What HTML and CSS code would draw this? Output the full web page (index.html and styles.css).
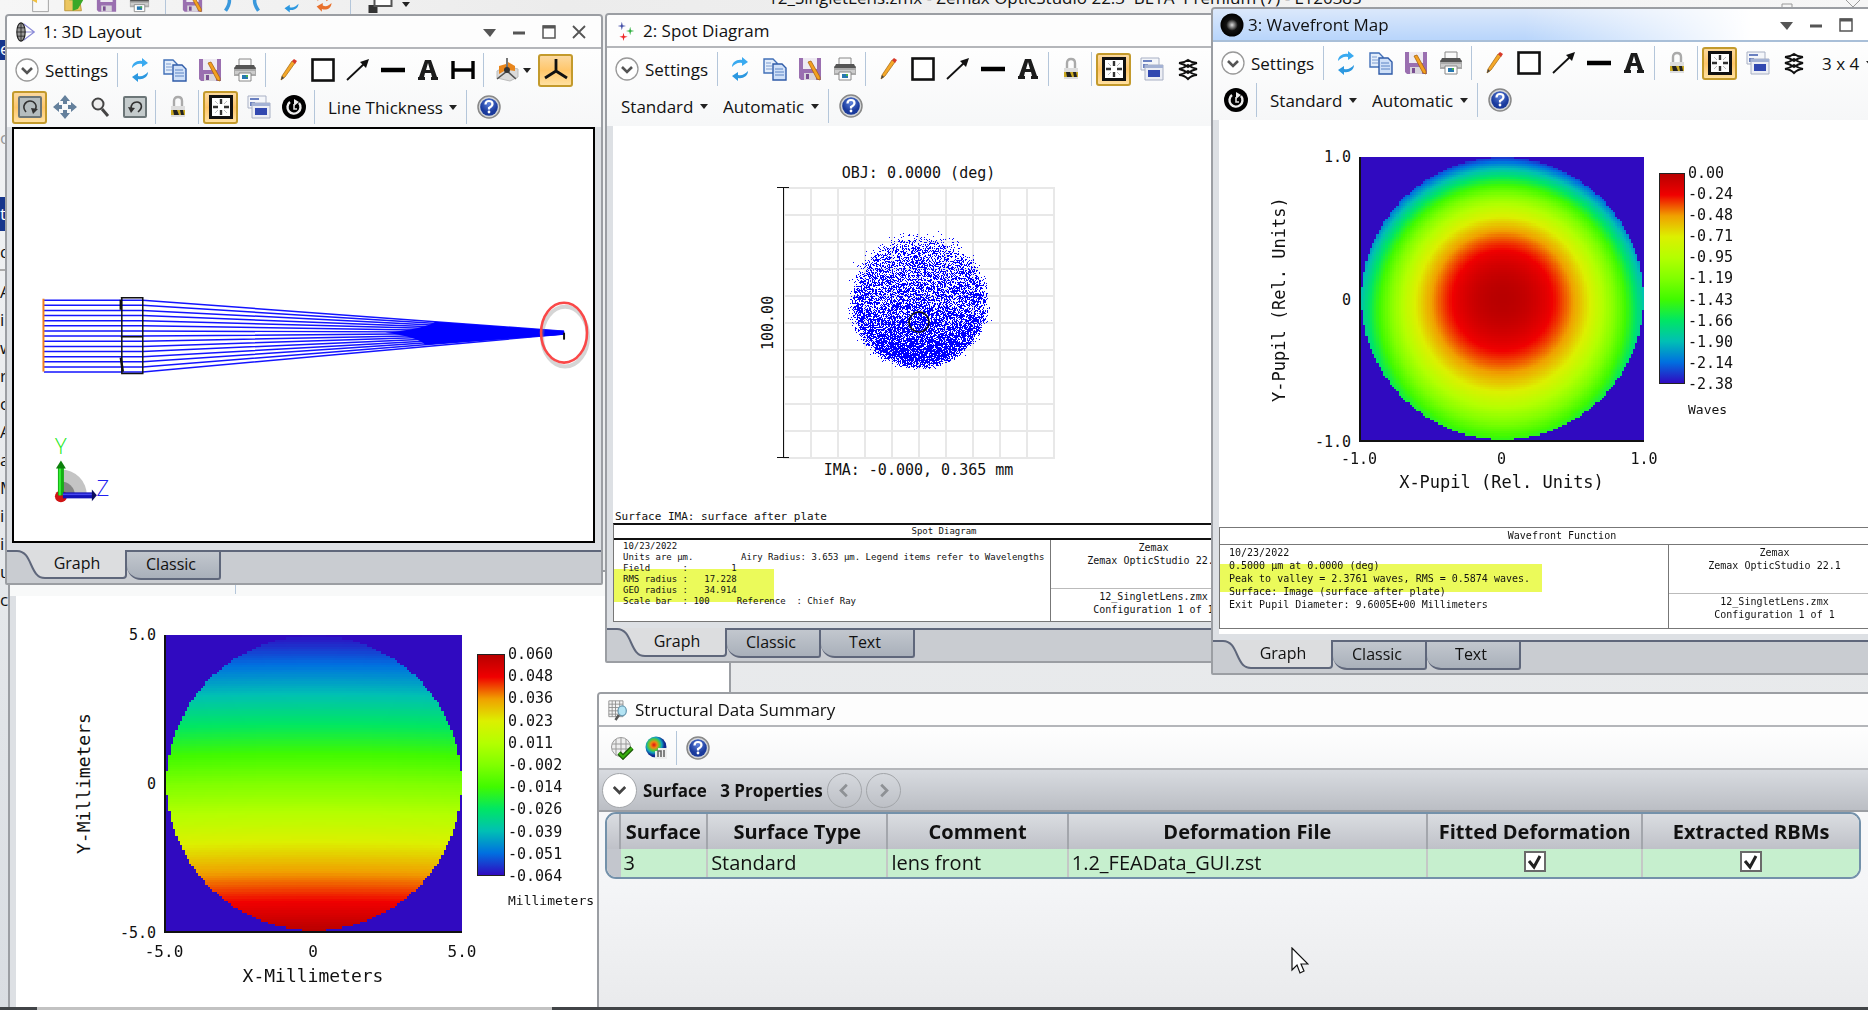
FILE: index.html
```html
<!DOCTYPE html>
<html lang="en">
<head>
    <meta charset="UTF-8">
    <meta name="viewport" content="width=device-width, initial-scale=1.0">
    <title>12_SingletLens.zmx - Zemax OpticStudio</title>
    <link rel="stylesheet" href="styles.css">
</head>
<body>
    <!-- Icon set -->
    <svg class="sprite" aria-hidden="true">
        <defs>
            <radialGradient id="ring"><stop offset="0" stop-color="#ddd"/><stop offset=".25" stop-color="#777"/><stop offset=".5" stop-color="#111"/><stop offset="1" stop-color="#000"/></radialGradient>
            <radialGradient id="blueball" cy=".3"><stop offset="0" stop-color="#5d82dc"/><stop offset="1" stop-color="#1a3a9c"/></radialGradient>
            <radialGradient id="heat" cx=".4" cy=".4"><stop offset="0" stop-color="#e01010"/><stop offset=".3" stop-color="#f08a10"/><stop offset=".55" stop-color="#50c840"/><stop offset=".75" stop-color="#10a0c0"/><stop offset="1" stop-color="#102a90"/></radialGradient>
        </defs>
        <symbol id="i-lens" viewBox="0 0 24 24"><path d="M9 2 22 12 9 22M2 12h20" fill="none" stroke="#8a8ad8" stroke-width="1.4"/><ellipse cx="6" cy="12" rx="5" ry="11" fill="#999" stroke="#222" stroke-width="1.4"/><path d="M6 1v22M2 7h8M1 12h10M2 17h8" stroke="#222"/></symbol>
        <symbol id="i-spots" viewBox="0 0 24 24"><path d="M7 1l1 4 4 1-4 1-1 4-1-4-4-1 4-1z" fill="#4450a8"/><path d="M17 7l1 4 4 1-4 1-1 4-1-4-4-1 4-1z" fill="#30b040"/><path d="M9 14l1 4 4 1-4 1-1 4-1-4-4-1 4-1z" fill="#f02828"/></symbol>
        <symbol id="i-ring" viewBox="0 0 24 24"><circle cx="12" cy="12" r="11.500" fill="url(#ring)"/></symbol>
        <symbol id="i-expand" viewBox="0 0 24 24"><circle cx="12" cy="12" r="11" fill="#fff" stroke="#999" stroke-width="1.300"/><path d="M7 10l5 5 5-5" fill="none" stroke="#555" stroke-width="2.600"/></symbol>
        <symbol id="i-refresh" viewBox="0 0 24 24"><path d="M4 10C4 5 9 2 14 3V0l6 5-6 4V6C10 5 7 7 4 10z" fill="#3aaaf0"/><path d="M20 14c0 5-5 8-10 7v3l-6-5 6-4v3c4 1 7-1 10-4z" fill="#2c98e0"/></symbol>
        <symbol id="i-copy" viewBox="0 0 24 24"><path d="M1 2h9l4 4v10H1z" fill="#e4eefb" stroke="#4270b8" stroke-width="1.400"/><path d="M3 6h5M3 9h6M3 12h6" stroke="#7c9cd0"/><path d="M10 7h9l4 4v12H10z" fill="#cfe0f8" stroke="#2f5ba8" stroke-width="1.400"/><path d="M12 12h8M12 15h9M12 18h9" stroke="#5c84c4"/></symbol>
        <symbol id="i-floppy" viewBox="0 0 24 24"><path d="M1 1h22v22H3l-2-2z" fill="#9a6fb0"/><path d="M5 1h14v11H5z" fill="#eeeaf2"/><path d="M6 16h12v7H6z" fill="#d8d4dc"/><path d="M8 17h3v5H8z" fill="#7a4f92"/></symbol>
        <symbol id="i-save" viewBox="0 0 24 24"><use href="#i-floppy"/><path d="M10 5l3-1 9 16v3l-3-1z" fill="#f4a020" stroke="#a86410" stroke-width=".8"/></symbol>
        <symbol id="i-print" viewBox="0 0 24 24"><path d="M6 1h12v8H6z" fill="#fafafa" stroke="#888"/><path d="M1 9h22v9H1z" fill="#aaa"/><path d="M3 7h18l2 4H1z" fill="#555"/><path d="M2 13h20v3H2z" fill="#ccc"/><path d="M6 15h12v8H6z" fill="#fff" stroke="#888"/><path d="M9 17h6v4H9z" fill="#2878b0"/><path d="M13 17h2v2h-2z" fill="#4ab04a"/></symbol>
        <symbol id="i-pencil" viewBox="0 0 24 24"><path d="M6 18 16 3l3 2L9 19l-4 3z" fill="#f6a828" stroke="#a8701c" stroke-width=".8"/><path d="M16 3l2-2 3 2-2 3z" fill="#d83a2a"/><path d="M5 22l1-4 2 2z" fill="#444"/></symbol>
        <symbol id="i-rect" viewBox="0 0 24 24"><rect x="1.500" y="1.500" width="21" height="21" fill="#fff" stroke="#111" stroke-width="2.600"/></symbol>
        <symbol id="i-arrow" viewBox="0 0 24 24"><path d="M1 22 19 5" stroke="#111" stroke-width="1.800"/><path d="M23 1 14 4l6 6z" fill="#111"/></symbol>
        <symbol id="i-line" viewBox="0 0 24 24"><path d="M0 12h24" stroke="#000" stroke-width="4.500"/></symbol>
        <symbol id="i-text" viewBox="0 0 24 24"><path d="M9 2h6l6 17h1v3h-7v-3h1l-1-4H9l-1 4h1v3H2v-3h1zM10 12h4l-2-7z" fill="#1c1c1c" fill-rule="evenodd"/></symbol>
        <symbol id="i-dim" viewBox="0 0 24 24"><path d="M2 3v18M22 3v18M2 12h20" stroke="#000" stroke-width="3.400"/></symbol>
        <symbol id="i-planes" viewBox="0 0 24 24"><path d="M2 13l9-5 12 3v8l-8 4-13-3z" fill="#dadada" stroke="#bbb"/><path d="M4 8l7-2v6l-7 4zM13 4l7 4v5l-7-1z" fill="#e8861c"/><path d="M12 0v13L2 21M12 13l9 8" stroke="#555" stroke-width="1.600" fill="none"/><circle cx="12" cy="12" r="3" fill="#333"/></symbol>
        <symbol id="i-tripod" viewBox="0 0 24 24"><path d="M12 1v12M12 13 1 20M12 13l11 7" stroke="#111" stroke-width="2.800" fill="none"/></symbol>
        <symbol id="i-rotate" viewBox="0 0 24 24"><rect x="1" y="2" width="22" height="20" rx="1" fill="#b4bcbe" stroke="#6c7678" stroke-width="2"/><path d="M8 17C3 11 8 6 12 6s8 4 5 9" fill="none" stroke="#333" stroke-width="1.600"/><path d="M13 13l7 1-5 5z" fill="#333"/></symbol>
        <symbol id="i-unrotate" viewBox="0 0 24 24"><rect x="1" y="2" width="22" height="20" rx="1" fill="#c4cbcc" stroke="#6c7678" stroke-width="2"/><path d="M15 17C21 12 18 7 14 7S8 9 8 14" fill="none" stroke="#333" stroke-width="1.600"/><path d="M5 12l7 1-4 5z" fill="#333"/></symbol>
        <symbol id="i-move" viewBox="0 0 24 24"><path d="M12 0l5 6h-3v3h-4V6H7zM12 24l5-6h-3v-3h-4v3H7zM0 12l6-5v3h3v4H6v3zM24 12l-6-5v3h-3v4h3v3z" fill="#64809c"/></symbol>
        <symbol id="i-zoom" viewBox="0 0 24 24"><circle cx="10" cy="9" r="5.500" fill="#eee" stroke="#444" stroke-width="2"/><path d="M14 14l6 7" stroke="#444" stroke-width="3"/></symbol>
        <symbol id="i-lock" viewBox="0 0 24 24"><path d="M8 12V6q0-4 4-4t4 4v6" fill="none" stroke="#aaa" stroke-width="2.400"/><path d="M5 11h14v11H5z" fill="#ddd"/><path d="M5 15h14v5H5z" fill="#c9a820"/><path d="M7 15h4l2 5H8zM14 15h3l1 5h-3z" fill="#222"/></symbol>
        <symbol id="i-fit" viewBox="0 0 24 24"><rect x="1.500" y="1.500" width="21" height="21" fill="#fff" stroke="#111" stroke-width="3"/><path d="M12 4v5M12 15v5M4 12h5M15 12h5" stroke="#333" stroke-width="2.400"/><path d="M6 6l3 3M18 6l-3 3M6 18l3-3M18 18l-3-3" stroke="#bbb"/></symbol>
        <symbol id="i-windows" viewBox="0 0 24 24"><path d="M1 1h18v12H1z" fill="#f4f6fa" stroke="#a8b0c4"/><path d="M3 3h9v2H3zM3 7h5v4H3z" fill="#6a80c0"/><path d="M5 8h18v15H5z" fill="#eceef4" stroke="#a8b0c4"/><path d="M5 8h18v3H5z" fill="#a4b2d4"/><path d="M8 13h12v7H8z" fill="#3148b0"/></symbol>
        <symbol id="i-clock" viewBox="0 0 24 24"><circle cx="12" cy="12" r="12" fill="#000"/><path d="M8 7a6.500 6.500 0 1 0 9 1" fill="none" stroke="#eee" stroke-width="2.400"/><path d="M12 4l5 3-5 4z" fill="#eee"/><path d="M12 9v5h3" fill="none" stroke="#ddd" stroke-width="1.600"/></symbol>
        <symbol id="i-help" viewBox="0 0 24 24"><circle cx="12" cy="12" r="11" fill="#d4d6d8" stroke="#888" stroke-width="1.500"/><circle cx="12" cy="12" r="8.800" fill="url(#blueball)"/><path d="M8.500 9.500q0-3.500 3.500-3.500t3.500 3q0 2-3.500 4v1.500" fill="none" stroke="#fff" stroke-width="2.200"/><circle cx="12" cy="17" r="1.400" fill="#fff"/></symbol>
        <symbol id="i-layers" viewBox="0 0 24 24"><path d="M12 3q4 3 9 3-5 1-9 4-4-3-9-4 5 0 9-3zM3 12q5 1 9 4 4-3 9-4-5-1-9-4-4 3-9 4zM3 18q5 0 9 4 4-4 9-4-5-1-9-4-4 3-9 4z" fill="#fff" stroke="#111" stroke-width="2"/></symbol>
        <symbol id="i-sheet" viewBox="0 0 24 24"><path d="M1 1h17v19H1z" fill="#f4f4f4" stroke="#888"/><path d="M1 5h17M1 9h17M1 13h17M1 17h17M5 1v19M9 1v19M14 1v19" stroke="#888"/><ellipse cx="17" cy="13" rx="5" ry="6" fill="#b4e4f4" stroke="#6898b0" stroke-width="1.500"/><path d="M13 18l-4 6" stroke="#555" stroke-width="3"/></symbol>
        <symbol id="i-meshok" viewBox="0 0 24 24"><circle cx="11" cy="11" r="9.500" fill="#eee" stroke="#999"/><path d="M2 8h18M2 13h18M6 3v17M11 2v19M16 3v17" stroke="#999"/><path d="M9 17l4 4L22 12" fill="none" stroke="#1c5a08" stroke-width="4.600"/><path d="M9 17l4 4L22 12" fill="none" stroke="#38b010" stroke-width="2.200"/></symbol>
        <symbol id="i-heat" viewBox="0 0 24 24"><circle cx="12" cy="11" r="10.500" fill="url(#heat)"/><path d="M11 15h3v-3h9v11H11z" fill="#eee"/><path d="M14 21v-6h3v6M20 21v-7" stroke="#666" stroke-width="1.600" fill="none"/></symbol>
        <symbol id="i-new" viewBox="0 0 24 24"><path d="M3 0h18v23H3z" fill="#f8f8f8" stroke="#999"/><path d="M2 10l6-4v7z" fill="#f0c040"/></symbol>
        <symbol id="i-folder" viewBox="0 0 24 24"><path d="M2 2h16l3 20H2z" fill="#ecc660" stroke="#b89030"/><path d="M11 22V10H7l8-9 8 9-6 10z" fill="#3aa828"/></symbol>
        <symbol id="i-undo" viewBox="0 0 24 24"><path d="M4 2q20 2 8 20" fill="none" stroke="#3a98dc" stroke-width="4"/></symbol>
        <symbol id="i-redo" viewBox="0 0 24 24"><path d="M20 2q-20 2-8 20" fill="none" stroke="#3a98dc" stroke-width="4"/></symbol>
        <symbol id="i-orange" viewBox="0 0 24 24"><path d="M4 11C4 5 10 2 15 4l0-3 6 6-7 4V8C10 6 7 8 4 11zM20 13c0 6-6 9-11 7v3l-6-6 7-4v3c4 2 7 0 10-3z" fill="#e8702c"/></symbol>
        <symbol id="i-boxes" viewBox="0 0 24 24"><path d="M0 15h9v8H0z" fill="#333"/><path d="M6 2h17v14H6z" fill="#fff" stroke="#555" stroke-width="2"/></symbol>
        <symbol id="i-menu" viewBox="0 0 20 20"><path d="M4 7h13l-6 8z" fill="#555"/></symbol>
        <symbol id="i-min" viewBox="0 0 20 20"><path d="M4 11h12" stroke="#555" stroke-width="3"/></symbol>
        <symbol id="i-max" viewBox="0 0 20 20"><path d="M4 4h12v12H4z" fill="none" stroke="#555" stroke-width="1.500"/><path d="M4 5h12" stroke="#555" stroke-width="3"/></symbol>
        <symbol id="i-close" viewBox="0 0 20 20"><path d="M4 4l12 12M16 4 4 16" stroke="#555" stroke-width="1.800"/></symbol>
        <symbol id="tab-shape" viewBox="0 0 120 29"><path d="M0 1h10C26 1 22 28 38 28h78q3 0 3-3V0H0z" fill="#dcdddf"/><path d="M0 1h10C26 1 22 28 38 28h78q3 0 3-3V0" fill="none" stroke="#5f677b" stroke-width="2"/></symbol>
    </svg>

    <!-- Main application frame -->
    <header class="app-bar">
        <div class="app-tools">
            <svg><use href="#i-new"/></svg>
            <svg><use href="#i-folder"/></svg>
            <svg><use href="#i-floppy"/></svg>
            <svg><use href="#i-print"/></svg>
            <span class="sep"></span>
            <svg><use href="#i-save"/></svg>
            <svg><use href="#i-undo"/></svg>
            <svg><use href="#i-redo"/></svg>
            <svg><use href="#i-refresh"/></svg>
            <svg><use href="#i-orange"/></svg>
            <span class="sep"></span>
            <svg class="boxes"><use href="#i-boxes"/></svg>
            <span class="caret"></span>
        </div>
        <p class="app-title">12_SingletLens.zmx - Zemax OpticStudio 22.3&nbsp; BETA&nbsp; Premium (7) - L120385</p>
        <svg class="app-restore" viewBox="0 0 90 14"><path d="M1 14V8h10v6M4 8V4h10v7h-3M68 0l14 14M82 0 68 14" fill="none" stroke="#999"/></svg>
    </header>
    <nav class="sidebar">
        <span class="mark">e</span>
        <span class="faint">o</span>
        <span class="mark mark-low">t</span>
        <span class="head">d</span>
        <ul>
            <li>A</li><li>i</li><li>w</li><li>r</li><li>o</li><li>A</li><li>a</li><li>M</li><li>i</li><li>i</li><li>u</li><li>c</li>
        </ul>
    </nav>

    <!-- Deformation plot, behind the others -->
    <section class="window win-deform">
        <div class="toolbar-end"><span class="sep"></span></div>
        <div class="paper">
            <figure class="heatmap heatmap-deform">
                <div class="y-label">Y-Millimeters</div>
                <div class="y-ticks"><span>5.0</span><span>0</span><span>-5.0</span></div>
                <canvas id="deformMap" width="128" height="128"></canvas>
                <div class="legend-bar"></div>
                <div class="legend-ticks"><span>0.060</span><span>0.048</span><span>0.036</span><span>0.023</span><span>0.011</span><span>-0.002</span><span>-0.014</span><span>-0.026</span><span>-0.039</span><span>-0.051</span><span>-0.064</span></div>
                <div class="legend-unit">Millimeters</div>
                <div class="x-ticks"><span>-5.0</span><span>0</span><span>5.0</span></div>
                <figcaption class="x-label">X-Millimeters</figcaption>
            </figure>
        </div>
    </section>

    <!-- 1: 3D Layout -->
    <section class="window win-layout">
        <header class="title">
            <svg class="icon"><use href="#i-lens"/></svg>
            <h2>1: 3D Layout</h2>
            <div class="win-buttons">
                <button aria-label="Menu"><svg><use href="#i-menu"/></svg></button>
                <button aria-label="Minimize"><svg><use href="#i-min"/></svg></button>
                <button aria-label="Maximize"><svg><use href="#i-max"/></svg></button>
                <button aria-label="Close"><svg><use href="#i-close"/></svg></button>
            </div>
        </header>
        <div class="toolbar">
            <div class="tools">
                <button class="settings"><svg class="icon"><use href="#i-expand"/></svg>Settings</button>
                <span class="sep"></span>
                <button class="tool" aria-label="Update"><svg class="icon"><use href="#i-refresh"/></svg></button>
                <button class="tool" aria-label="Copy"><svg class="icon"><use href="#i-copy"/></svg></button>
                <button class="tool" aria-label="Save"><svg class="icon"><use href="#i-save"/></svg></button>
                <button class="tool" aria-label="Print"><svg class="icon"><use href="#i-print"/></svg></button>
                <span class="sep"></span>
                <button class="tool" aria-label="Draw"><svg class="icon"><use href="#i-pencil"/></svg></button>
                <button class="tool" aria-label="Rectangle"><svg class="icon"><use href="#i-rect"/></svg></button>
                <button class="tool" aria-label="Arrow"><svg class="icon"><use href="#i-arrow"/></svg></button>
                <button class="tool" aria-label="Line"><svg class="icon"><use href="#i-line"/></svg></button>
                <button class="tool" aria-label="Annotate"><svg class="icon"><use href="#i-text"/></svg></button>
                <button class="tool" aria-label="Dimension"><svg class="icon"><use href="#i-dim"/></svg></button>
                <span class="sep"></span>
                <button class="tool tool-wide" aria-label="View plane"><svg class="icon"><use href="#i-planes"/></svg><span class="caret"></span></button>
                <button class="tool on" aria-label="Axis"><svg class="icon"><use href="#i-tripod"/></svg></button>
            </div>
            <div class="tools">
                <button class="tool on" aria-label="Rotate"><svg class="icon"><use href="#i-rotate"/></svg></button>
                <button class="tool" aria-label="Pan"><svg class="icon"><use href="#i-move"/></svg></button>
                <button class="tool" aria-label="Zoom"><svg class="icon"><use href="#i-zoom"/></svg></button>
                <button class="tool" aria-label="Reset view"><svg class="icon"><use href="#i-unrotate"/></svg></button>
                <span class="sep"></span>
                <button class="tool" aria-label="Lock"><svg class="icon"><use href="#i-lock"/></svg></button>
                <span class="sep"></span>
                <button class="tool on fit" aria-label="Fit"><svg class="icon"><use href="#i-fit"/></svg></button>
                <button class="tool" aria-label="Clone window"><svg class="icon"><use href="#i-windows"/></svg></button>
                <button class="tool" aria-label="Auto update"><svg class="icon"><use href="#i-clock"/></svg></button>
                <span class="sep"></span>
                <span class="drop"><select aria-label="Line thickness"><option>Line Thickness</option></select></span>
                <span class="sep"></span>
                <button class="tool" aria-label="Help"><svg class="icon"><use href="#i-help"/></svg></button>
            </div>
        </div>
        <div class="paper paper-framed">
            <svg class="layout-plot" viewBox="0 0 580 412" preserveAspectRatio="xMinYMin meet">
                <g id="rays" stroke="#1414ff" stroke-width="1.500" fill="none"></g>
                <path d="M372 204Q412 200 422 193L551 202.500V206L412 216Q404 208 372 204z" fill="#0000ff"/>
                <path d="M29.500 170v73" stroke="#f08020" stroke-width="2"/>
                <path d="M107 169h22v76h-21V169M107 208h22" fill="none" stroke="#111" stroke-width="1.500"/>
                <path d="M107 171v10M107 229l2 14" stroke="#111" stroke-width="2.500"/>
                <path d="M551 204v7" stroke="#111" stroke-width="2"/>
                <ellipse cx="552" cy="208" rx="23" ry="30" fill="none" stroke="#888" stroke-opacity=".35" stroke-width="4"/>
                <ellipse cx="551" cy="204" rx="23" ry="30" fill="none" stroke="#fa4848" stroke-width="2.600"/>
                <path d="M47 367V341a26 26 0 0 1 26 26z" fill="#c4c4c4"/>
                <path d="M47 367V353a14 14 0 0 1 14 14z" fill="#858585"/>
                <circle cx="47" cy="368" r="6" fill="#d01414"/>
                <path d="M47 367V339" stroke="#14b014" stroke-width="6"/>
                <path d="M46 367V339" stroke="#34f034" stroke-width="2"/>
                <path d="M42 340l5-8 5 8z" fill="#0c800c"/>
                <path d="M49 367h30" stroke="#1212b8" stroke-width="6"/>
                <path d="M49 366h30" stroke="#4848f0" stroke-width="1.500"/>
                <path d="M78 361l5 6-5 6z" fill="#0c0c60"/>
                <text class="axis-y" x="47" y="326" text-anchor="middle">Y</text>
                <text class="axis-z" x="89" y="368" text-anchor="middle">Z</text>
            </svg>
        </div>
        <div class="tabs" role="tablist">
            <button class="tab active" role="tab"><svg><use href="#tab-shape"/></svg><span>Graph</span></button>
            <button class="tab" role="tab">Classic</button>
        </div>
    </section>

    <!-- 2: Spot Diagram -->
    <section class="window win-spot">
        <header class="title">
            <svg class="icon"><use href="#i-spots"/></svg>
            <h2>2: Spot Diagram</h2>
        </header>
        <div class="toolbar">
            <div class="tools">
                <button class="settings"><svg class="icon"><use href="#i-expand"/></svg>Settings</button>
                <span class="sep"></span>
                <button class="tool" aria-label="Update"><svg class="icon"><use href="#i-refresh"/></svg></button>
                <button class="tool" aria-label="Copy"><svg class="icon"><use href="#i-copy"/></svg></button>
                <button class="tool" aria-label="Save"><svg class="icon"><use href="#i-save"/></svg></button>
                <button class="tool" aria-label="Print"><svg class="icon"><use href="#i-print"/></svg></button>
                <span class="sep"></span>
                <button class="tool" aria-label="Draw"><svg class="icon"><use href="#i-pencil"/></svg></button>
                <button class="tool" aria-label="Rectangle"><svg class="icon"><use href="#i-rect"/></svg></button>
                <button class="tool" aria-label="Arrow"><svg class="icon"><use href="#i-arrow"/></svg></button>
                <button class="tool" aria-label="Line"><svg class="icon"><use href="#i-line"/></svg></button>
                <button class="tool" aria-label="Annotate"><svg class="icon"><use href="#i-text"/></svg></button>
                <span class="sep"></span>
                <button class="tool" aria-label="Lock"><svg class="icon"><use href="#i-lock"/></svg></button>
                <span class="sep"></span>
                <button class="tool on fit" aria-label="Fit"><svg class="icon"><use href="#i-fit"/></svg></button>
                <button class="tool" aria-label="Clone window"><svg class="icon"><use href="#i-windows"/></svg></button>
                <button class="tool overlay" aria-label="Overlay"><svg class="icon"><use href="#i-layers"/></svg></button>
            </div>
            <div class="tools">
                <span class="drop"><select aria-label="Plot scale"><option>Standard</option></select></span>
                <span class="drop"><select aria-label="Line style"><option>Automatic</option></select></span>
                <span class="sep"></span>
                <button class="tool" aria-label="Help"><svg class="icon"><use href="#i-help"/></svg></button>
            </div>
        </div>
        <div class="paper">
            <figure class="spot-plot">
                <div class="spot-head">OBJ: 0.0000 (deg)</div>
                <div class="spot-scale">100.00</div>
                <canvas id="spotMap" width="278" height="272"></canvas>
                <figcaption class="spot-foot">IMA: -0.000, 0.365 mm</figcaption>
            </figure>
            <p class="surface-note">Surface IMA: surface after plate</p>
            <div class="info info-spot">
                <h3>Spot Diagram</h3>
                <div class="info-left">
                    <span class="marker"></span>
                    <p>10/23/2022</p>
                    <p class="units"><span>Units are µm.</span><span>Airy Radius: 3.653 µm. Legend items refer to Wavelengths</span></p>
                    <p>Field      :        1</p>
                    <p>RMS radius :   17.228</p>
                    <p>GEO radius :   34.914</p>
                    <p>Scale bar  : 100     Reference  : Chief Ray</p>
                </div>
                <div class="info-top"><p>Zemax</p><p>Zemax OpticStudio 22.1</p></div>
                <div class="info-bottom"><p>12_SingletLens.zmx</p><p>Configuration 1 of 1</p></div>
            </div>
        </div>
        <div class="tabs" role="tablist">
            <button class="tab active" role="tab"><svg><use href="#tab-shape"/></svg><span>Graph</span></button>
            <button class="tab" role="tab">Classic</button>
            <button class="tab" role="tab">Text</button>
        </div>
    </section>

    <!-- 3: Wavefront Map -->
    <section class="window win-wave">
        <header class="title title-active">
            <svg class="icon"><use href="#i-ring"/></svg>
            <h2>3: Wavefront Map</h2>
            <div class="win-buttons">
                <button aria-label="Menu"><svg><use href="#i-menu"/></svg></button>
                <button aria-label="Minimize"><svg><use href="#i-min"/></svg></button>
                <button aria-label="Maximize"><svg><use href="#i-max"/></svg></button>
                <button aria-label="Close"><svg><use href="#i-close"/></svg></button>
            </div>
        </header>
        <div class="toolbar">
            <div class="tools">
                <button class="settings"><svg class="icon"><use href="#i-expand"/></svg>Settings</button>
                <span class="sep"></span>
                <button class="tool" aria-label="Update"><svg class="icon"><use href="#i-refresh"/></svg></button>
                <button class="tool" aria-label="Copy"><svg class="icon"><use href="#i-copy"/></svg></button>
                <button class="tool" aria-label="Save"><svg class="icon"><use href="#i-save"/></svg></button>
                <button class="tool" aria-label="Print"><svg class="icon"><use href="#i-print"/></svg></button>
                <span class="sep"></span>
                <button class="tool" aria-label="Draw"><svg class="icon"><use href="#i-pencil"/></svg></button>
                <button class="tool" aria-label="Rectangle"><svg class="icon"><use href="#i-rect"/></svg></button>
                <button class="tool" aria-label="Arrow"><svg class="icon"><use href="#i-arrow"/></svg></button>
                <button class="tool" aria-label="Line"><svg class="icon"><use href="#i-line"/></svg></button>
                <button class="tool" aria-label="Annotate"><svg class="icon"><use href="#i-text"/></svg></button>
                <span class="sep"></span>
                <button class="tool" aria-label="Lock"><svg class="icon"><use href="#i-lock"/></svg></button>
                <span class="sep"></span>
                <button class="tool on fit" aria-label="Fit"><svg class="icon"><use href="#i-fit"/></svg></button>
                <button class="tool" aria-label="Clone window"><svg class="icon"><use href="#i-windows"/></svg></button>
                <button class="tool overlay" aria-label="Overlay"><svg class="icon"><use href="#i-layers"/></svg></button>
                <span class="drop"><select aria-label="Window grid"><option>3 x 4</option></select></span>
            </div>
            <div class="tools">
                <button class="tool" aria-label="Auto update"><svg class="icon"><use href="#i-clock"/></svg></button>
                <span class="sep"></span>
                <span class="drop"><select aria-label="Plot scale"><option>Standard</option></select></span>
                <span class="drop"><select aria-label="Line style"><option>Automatic</option></select></span>
                <span class="sep"></span>
                <button class="tool" aria-label="Help"><svg class="icon"><use href="#i-help"/></svg></button>
            </div>
        </div>
        <div class="paper">
            <figure class="heatmap heatmap-wave">
                <div class="y-label">Y-Pupil (Rel. Units)</div>
                <div class="y-ticks"><span>1.0</span><span>0</span><span>-1.0</span></div>
                <canvas id="waveMap" width="128" height="128"></canvas>
                <div class="legend-bar"></div>
                <div class="legend-ticks"><span>0.00</span><span>-0.24</span><span>-0.48</span><span>-0.71</span><span>-0.95</span><span>-1.19</span><span>-1.43</span><span>-1.66</span><span>-1.90</span><span>-2.14</span><span>-2.38</span></div>
                <div class="legend-unit">Waves</div>
                <div class="x-ticks"><span>-1.0</span><span>0</span><span>1.0</span></div>
                <figcaption class="x-label">X-Pupil (Rel. Units)</figcaption>
            </figure>
            <div class="info info-wave">
                <h3>Wavefront Function</h3>
                <div class="info-left">
                    <span class="marker"></span>
                    <p>10/23/2022</p>
                    <p>0.5000 µm at 0.0000 (deg)</p>
                    <p>Peak to valley = 2.3761 waves, RMS = 0.5874 waves.</p>
                    <p>Surface: Image (surface after plate)</p>
                    <p>Exit Pupil Diameter: 9.6005E+00 Millimeters</p>
                </div>
                <div class="info-top"><p>Zemax</p><p>Zemax OpticStudio 22.1</p></div>
                <div class="info-bottom"><p>12_SingletLens.zmx</p><p>Configuration 1 of 1</p></div>
            </div>
        </div>
        <div class="tabs" role="tablist">
            <button class="tab active" role="tab"><svg><use href="#tab-shape"/></svg><span>Graph</span></button>
            <button class="tab" role="tab">Classic</button>
            <button class="tab" role="tab">Text</button>
        </div>
    </section>

    <!-- Structural Data Summary -->
    <section class="window win-summary">
        <header class="title">
            <svg class="icon"><use href="#i-sheet"/></svg>
            <h2>Structural Data Summary</h2>
        </header>
        <div class="toolbar">
            <div class="tools">
                <button class="tool" aria-label="Check data"><svg class="icon"><use href="#i-meshok"/></svg></button>
                <button class="tool" aria-label="Data viewer"><svg class="icon"><use href="#i-heat"/></svg></button>
                <span class="sep"></span>
                <button class="tool" aria-label="Help"><svg class="icon"><use href="#i-help"/></svg></button>
            </div>
        </div>
        <div class="properties">
            <button class="round round-open" aria-label="Expand"><svg viewBox="0 0 20 20"><path d="M5 7l5 5 5-5"/></svg></button>
            <h3>Surface&nbsp;&nbsp; 3 Properties</h3>
            <button class="round" aria-label="Previous surface"><svg viewBox="0 0 20 20"><path d="M12 5l-5 5 5 5"/></svg></button>
            <button class="round" aria-label="Next surface"><svg viewBox="0 0 20 20"><path d="M8 5l5 5-5 5"/></svg></button>
        </div>
        <div class="table-frame">
            <table>
                <thead>
                    <tr>
                        <th class="c-head"></th>
                        <th class="c-surface">Surface</th>
                        <th class="c-type">Surface Type</th>
                        <th class="c-comment">Comment</th>
                        <th class="c-file">Deformation File</th>
                        <th class="c-fit">Fitted Deformation</th>
                        <th class="c-rbm">Extracted RBMs</th>
                    </tr>
                </thead>
                <tbody>
                    <tr>
                        <td class="row-head"></td>
                        <td>3</td>
                        <td>Standard</td>
                        <td>lens front</td>
                        <td>1.2_FEAData_GUI.zst</td>
                        <td class="check"><input type="checkbox" aria-label="Fitted Deformation" checked></td>
                        <td class="check"><input type="checkbox" aria-label="Extracted RBMs" checked></td>
                    </tr>
                </tbody>
            </table>
        </div>
    </section>

    <svg class="pointer" viewBox="0 0 18 27"><path d="M1 1v22l5-5 3 8 4-2-3-7h7z" fill="#fff" stroke="#111" stroke-width="1.200"/></svg>
    <div class="taskbar"><span></span></div>

    <script src="script.js"></script>
</body>
</html>
```
FILE: styles.css
```css
* {
    box-sizing: border-box;
}
body {
    margin: 0;
    height: 100vh;
    position: relative;
    overflow: hidden;
    background: linear-gradient(#f2f3f4, #e6e8ea 80%);
    font-family: "Open Sans", "Noto Sans", sans-serif;
    font-size: 17px;
    color: #111;
}
h2, h3, p, figure, ul {
    margin: 0;
    padding: 0;
}
button, select {
    font: inherit;
    color: inherit;
    background: none;
    border: none;
    padding: 0;
}
.sprite {
    position: absolute;
    width: 0;
    height: 0;
}

/* Application frame */
.app-bar {
    display: flex;
    height: 40px;
    padding-left: 30px;
    background: linear-gradient(90deg, #f6f6f6, #ececec 30%, #f6f6f6);
}
.app-tools {
    display: flex;
    gap: 12px;
    width: 738px;
    margin-top: -10px;
}
.app-tools svg {
    width: 21px;
    height: 24px;
}
.app-tools .boxes {
    width: 27px;
}
.app-tools .caret {
    margin-top: 12px;
    margin-left: -4px;
}
.app-title {
    flex: 1;
    line-height: 20px;
    margin-top: -12px;
    white-space: nowrap;
}
.app-restore {
    width: 90px;
    height: 14px;
}
.sidebar {
    width: 9px;
    overflow: hidden;
    height: 970px;
    padding-top: 1px;
    background: linear-gradient(#f4f5f6, #d9dde2);
}
.sidebar span {
    display: block;
}
.sidebar .mark {
    height: 34px;
    margin-top: -15px;
    line-height: 46px;
    background: #16358c;
    color: #fff;
}
.sidebar .mark-low {
    margin-top: 0;
    line-height: 34px;
}
.faint {
    height: 137px;
    line-height: 156px;
    color: #999;
}
.head {
    height: 38px;
    line-height: 42px;
}
.sidebar ul {
    list-style: none;
    border-top: 2px solid #aaa;
    padding-top: 7px;
    line-height: 28px;
}

/* Windows */
.window {
    position: absolute;
    border: 2px solid #9b9ea3;
    border-radius: 4px 4px 2px 2px;
    background: #dde0e4;
    overflow: hidden;
}
.win-deform {
    left: 8px;
    top: 570px;
    right: 1137px;
    bottom: 1px;
}
.win-layout {
    left: 5px;
    top: 14px;
    right: 1265px;
}
.win-spot {
    left: 605px;
    top: 13px;
    right: 586px;
}
.win-wave {
    left: 1211px;
    top: 7px;
    right: -38px;
}
.win-summary {
    left: 597px;
    top: 692px;
    right: -4px;
    bottom: -4px;
    background: linear-gradient(#fcfcfc, #f4f5f7 60%, #e9eaec);
}
.title {
    display: flex;
    align-items: center;
    gap: 7px;
    height: 33px;
    padding: 0 12px 0 9px;
    background: #fdfdfd;
    border-bottom: 2px solid #b4b6ba;
}
.title-active {
    gap: 4px;
    padding: 0 18px 0 7px;
    background: linear-gradient(90deg, rgba(255, 255, 255, 0) 45%, #fff 78%), linear-gradient(#dbe8fb, #b8d5fb);
    border-bottom-color: #a9bfd8;
}
.title h2 {
    flex: 1;
    font-size: 17px;
    font-weight: 400;
}
.title .icon {
    width: 20px;
    height: 24px;
}
.title-active .icon {
    width: 24px;
}
.win-buttons {
    display: flex;
    gap: 10px;
}
.win-buttons button, .win-buttons svg {
    display: block;
    width: 20px;
    height: 20px;
}
.icon {
    display: block;
    width: 24px;
    height: 24px;
    flex: none;
}

/* Toolbars */
.toolbar {
    padding: 3px 0 1px 5px;
    background: linear-gradient(#fefefe, #f6f7f8);
}
.tools {
    display: flex;
    align-items: center;
    height: 36px;
    margin-bottom: 1px;
    white-space: nowrap;
}
.settings {
    display: flex;
    align-items: center;
    gap: 6px;
    width: 102px;
    padding-left: 3px;
}
.tool {
    display: flex;
    align-items: center;
    justify-content: center;
    flex: none;
    width: 35px;
    height: 33px;
}
.tool-wide {
    width: 50px;
}
.tool.on {
    border: 2px solid #c39a2c;
    border-radius: 3px;
    background: linear-gradient(#fbd9a0, #ffc66a 50%, #ffe0a0);
}
.fit {
    margin-right: 3px;
}
.overlay {
    width: 38px;
}
.sep {
    flex: none;
    width: 1px;
    height: 34px;
    margin: 0 4px 0 3px;
    background: #b4c6da;
}
.caret {
    border: 4px solid transparent;
    border-top: 5px solid #222;
    border-bottom: none;
    margin-left: 4px;
}
.drop {
    display: flex;
    align-items: center;
    padding: 0 6px 0 9px;
}
.drop select {
    appearance: none;
}
.drop::after {
    content: "";
    margin-left: 6px;
    border: 4px solid transparent;
    border-top: 5px solid #222;
    border-bottom: none;
}
.toolbar-end {
    height: 24px;
    padding-left: 222px;
    background: #f8f9f9;
}
.toolbar-end .sep {
    display: block;
    height: 22px;
}

/* Plot area */
.paper {
    margin-left: 6px;
    padding-bottom: 5px;
    background: #fff;
    font-family: "DejaVu Sans Mono", "Liberation Mono", monospace;
}
.paper-framed {
    margin: 0 6px 7px 5px;
    padding: 0;
    border: 2px solid #000;
}
.layout-plot {
    display: block;
    width: 100%;
    height: 412px;
}
.axis-y, .axis-z {
    font-family: "Open Sans", sans-serif;
    font-size: 22px;
    font-weight: 300;
    fill: #20e820;
}
.axis-z {
    fill: #2020f0;
}
.win-deform .paper {
    height: 420px;
}

/* Heat maps */
.heatmap {
    --map: 285px;
    --bar: 26px;
    --bar-height: 211px;
    --bar-top: 16px;
    display: grid;
    grid-template-columns: 24px 68px var(--map) var(--bar) auto;
    grid-template-rows: var(--map) 21px 22px;
    padding: 37px 0 42px 48px;
    font-size: 15px;
}
.heatmap-deform {
    --map: 298px;
    --bar: 28px;
    --bar-height: 222px;
    --bar-top: 19px;
    grid-template-rows: var(--map) 23px 24px;
    padding: 39px 0 0 56px;
}
.heatmap canvas {
    width: 100%;
    height: 100%;
    image-rendering: pixelated;
    border-left: 2px solid #111;
    border-bottom: 2px solid #111;
}
.y-label {
    writing-mode: vertical-rl;
    transform: rotate(180deg);
    text-align: center;
    line-height: 24px;
    font-size: 17px;
    white-space: nowrap;
}
.y-ticks, .legend-ticks {
    display: flex;
    flex-direction: column;
    justify-content: space-between;
    white-space: nowrap;
}
.y-ticks {
    padding-right: 8px;
}
.y-ticks span, .legend-ticks span {
    display: flex;
    align-items: center;
    justify-content: flex-end;
    height: 0;
}
.legend-bar {
    height: var(--bar-height);
    margin: var(--bar-top) 0 0 15px;
    width: var(--bar);
    border: 1px solid #222;
    background: linear-gradient(#b80000, #f00000 10%, #f0a000 20%, #dcf000 30%, #b4ff00 40%, #80ff00 50%, #40fa00 60%, #00e664 70%, #00c0b4 80%, #0070e0 90%, #300ac0);
}
.legend-ticks {
    height: var(--bar-height);
    margin: var(--bar-top) 0 0 18px;
    grid-column: 5;
    grid-row: 1;
}
.legend-ticks span {
    justify-content: flex-start;
}
.legend-unit {
    grid-column: 5;
    grid-row: 1;
    align-self: end;
    margin: 0 0 22px 18px;
    font-size: 13px;
    line-height: 20px;
}
.x-ticks {
    grid-column: 3;
    grid-row: 2;
    display: flex;
    justify-content: space-between;
    padding-top: 8px;
}
.x-ticks span {
    display: flex;
    justify-content: center;
    width: 0;
}
.x-label {
    grid-column: 3;
    grid-row: 3;
    padding-top: 9px;
    text-align: center;
    font-size: 17px;
    white-space: nowrap;
}
.heatmap-deform .y-label, .heatmap-deform .x-label {
    font-size: 18px;
}
.heatmap-deform .x-ticks {
    padding-top: 9px;
    font-size: 16px;
}

/* Spot diagram */
.spot-plot {
    display: grid;
    grid-template-columns: 17px 278px;
    padding: 37px 0 30px 147px;
    font-size: 15px;
    line-height: 20px;
    text-align: center;
}
.spot-head, .spot-foot {
    grid-column: 2;
    padding: 0 0 4px 5px;
}
.spot-foot {
    padding: 1px 0 0 5px;
}
.spot-scale {
    writing-mode: vertical-rl;
    transform: rotate(180deg);
    line-height: 17px;
}
.spot-plot canvas {
    display: block;
}
.surface-note {
    padding-left: 2px;
    font-size: 11px;
    line-height: 13px;
}

/* Info block under each plot */
.info {
    display: grid;
    grid-template-columns: 449px 1fr;
    grid-template-rows: auto 49px 34px;
    border: 1px solid #777;
    border-right: none;
    font-size: 10px;
    line-height: 13px;
}
.info p {
    white-space: pre;
}
.info h3 {
    grid-column: 1 / -1;
    padding: 1px 0 2px;
    border-bottom: 1px solid #777;
    font-size: 10px;
    font-weight: 400;
    text-align: center;
}
.info-left {
    grid-row: 2 / 4;
    position: relative;
    padding: 1px 0 0 9px;
    border-right: 1px solid #777;
}
.info-left p {
    position: relative;
}
.info-top, .info-bottom {
    padding: 1px 24px 0 0;
    text-align: center;
}
.info-top {
    border-bottom: 1px solid #bbb;
}
.info-spot {
    grid-template-columns: 437px 1fr;
    grid-template-rows: auto 49px 32px;
    border-top: 2px solid #111;
}
.info-spot h3 {
    border-bottom: 2px solid #111;
    padding: 0 6px 0 0;
    font-size: 9px;
}
.info-spot .info-left {
    font-size: 9px;
    line-height: 11px;
}
.info-spot .units {
    display: flex;
}
.info-spot .units span:first-child {
    width: 118px;
}
.win-spot .paper {
    margin-bottom: 6px;
    padding-bottom: 0;
}
.win-wave .paper {
    margin-bottom: 6px;
}
.marker {
    position: absolute;
    left: 0;
    top: 29px;
    width: 160px;
    height: 33px;
    background: #ebfa5a;
}
.info-wave .marker {
    top: 19px;
    width: 322px;
    height: 28px;
}

/* Tabs */
.tabs {
    display: flex;
    height: 33px;
    border-top: 2px solid #5f677b;
    background: #c9ccd1;
    font-size: 16px;
}
.tab {
    width: 94px;
    height: 28px;
    padding: 0 4px 2px 0;
    border-right: 2px solid #5f677b;
    border-bottom: 2px solid #5f677b;
    border-radius: 0 0 3px 14px;
    background: linear-gradient(#c2c7ce, #a9b0ba);
    line-height: 24px;
}
.tab.active {
    position: relative;
    width: 120px;
    height: 29px;
    margin-top: -2px;
    padding: 0 0 3px 20px;
    border: none;
    background: none;
}
.tab.active svg {
    position: absolute;
    left: 0;
    top: 0;
    width: 120px;
    height: 29px;
}
.tab.active span {
    position: relative;
}

/* Structural data summary */
.win-summary .toolbar {
    padding-left: 6px;
    padding-bottom: 2px;
    border-bottom: 2px solid #b4b6ba;
}
.win-summary .tools {
    margin: 0;
}
.win-summary .tool {
    width: 34px;
}
.properties {
    display: flex;
    align-items: center;
    gap: 4px;
    height: 42px;
    padding-left: 3px;
    background: linear-gradient(#d8dbe0, #bbbec4);
    border-bottom: 2px solid #9b9ea3;
}
.properties h3 {
    padding-left: 2px;
    font-size: 17px;
}
.round {
    width: 35px;
    height: 35px;
    border: 1px solid #a2a5a9;
    border-radius: 50%;
}
.round-open {
    background: #fff;
}
.round svg {
    display: block;
    width: 23px;
    height: 23px;
    margin: 0 auto;
    fill: none;
    stroke: #8e9195;
    stroke-width: 2.4;
}
.round-open svg {
    stroke: #444;
}
.table-frame {
    margin: 0 9px 0 6px;
    border: 2px solid #7391aa;
    border-radius: 11px;
    overflow: hidden;
}
table {
    width: 100%;
    table-layout: fixed;
    border-collapse: collapse;
    font-size: 20px;
}
th {
    height: 35px;
    padding: 0;
    border-right: 2px solid #a3a6ac;
    background: linear-gradient(#dadde1, #bfc1c8);
    line-height: 32px;
    white-space: nowrap;
}
td {
    height: 28px;
    padding: 0 3px;
    border-right: 2px solid #c4c8c6;
    background: #c6efce;
    line-height: 28px;
}
th:last-child, td:last-child {
    border-right: none;
}
.row-head {
    background: #c3c6cd;
    border-color: #c3c6cd;
}
.c-head { width: 1%; }
.c-surface { width: 7%; }
.c-type { width: 14.4%; }
.c-comment { width: 14.4%; }
.c-file { width: 28.7%; }
.c-fit { width: 17.2%; }
.check {
    text-align: center;
}
.check input {
    appearance: none;
    display: block;
    width: 22px;
    height: 21px;
    margin: 0 auto 4px;
    border: 2px solid #6a6a6a;
    background: #fff url("data:image/svg+xml,%3Csvg xmlns='http://www.w3.org/2000/svg' viewBox='0 0 18 17'%3E%3Cpath d='M3 8l5 6 6-11' fill='none' stroke='%23222' stroke-width='3'/%3E%3C/svg%3E") center no-repeat;
}
.pointer {
    position: absolute;
    left: 1291px;
    top: 947px;
    width: 18px;
    height: 27px;
}
.taskbar {
    position: absolute;
    left: 0;
    right: 0;
    bottom: 0;
    height: 3px;
    background: #414447;
}
.taskbar span {
    display: block;
    width: 515px;
    height: 3px;
    margin-left: 37px;
    background: #c2c2c2;
}
```
FILE: script.js
```js
const stops = [
    [184, 0, 0], [240, 0, 0], [240, 160, 0], [220, 240, 0], [180, 255, 0],
    [128, 255, 0], [64, 250, 0], [0, 230, 100], [0, 192, 180], [0, 112, 224], [48, 10, 192]
];

// t runs from 0 (red) to 1 (violet)
function color(t) {
    const p = Math.min(Math.max(t, 0), 1) * 10;
    const i = Math.min(Math.floor(p), 9);
    const f = p - i;
    return stops[i].map((c, k) => c + (stops[i + 1][k] - c) * f);
}

function drawMap(id, fn) {
    const canvas = document.getElementById(id);
    const ctx = canvas.getContext('2d');
    const n = canvas.width;
    const img = ctx.createImageData(n, n);
    for (let j = 0; j < n; j++) {
        for (let i = 0; i < n; i++) {
            const x = (i + 0.5) / n * 2 - 1;
            const y = 1 - (j + 0.5) / n * 2;
            const inside = Math.hypot(x, y) < 0.995;
            const c = color(inside ? fn(x, y) : 1);
            img.data.set([c[0], c[1], c[2], 255], (j * n + i) * 4);
        }
    }
    ctx.putImageData(img, 0, 0);
}

drawMap('waveMap', (x, y) => {
    const r2 = x * x + y * y;
    return 0.8 * r2 + 0.17 * y * r2;
});
drawMap('deformMap', (x, y) => (y + 1) / 2 + 0.01 * x * x);

// Repeatable random numbers so the spot pattern stays the same
let seed = 20221023;
function rand() {
    seed = (seed * 1664525 + 1013904223) % 4294967296;
    return seed / 4294967296;
}

function drawSpots() {
    const ctx = document.getElementById('spotMap').getContext('2d');
    ctx.fillStyle = '#e8e8e8';
    for (let i = 0; i <= 10; i++) {
        ctx.fillRect(6 + i * 27, 1, 2, 271);
        ctx.fillRect(6, i * 27, 272, 2);
    }
    ctx.fillStyle = '#111';
    ctx.fillRect(6, 1, 1, 270);
    ctx.fillRect(0, 0, 12, 1);
    ctx.fillRect(0, 270, 12, 1);

    ctx.fillStyle = '#0000ff';
    let count = 0;
    while (count < 12500) {
        const x = rand() * 2 - 1;
        const y = rand() * 2 - 1;
        if (x * x + y * y > 1) continue;
        const d = (y + 1) / 2;
        if (rand() > 0.24 + 0.16 * d + 0.6 * Math.pow(d, 4)) continue;
        const spread = 9 - 4 * d;
        const nx = (rand() + rand() + rand() - 1.5) * spread;
        const ny = (rand() + rand() + rand() - 1.5) * spread;
        ctx.fillRect(Math.round(142 + x * 66 + nx), Math.round(115 + y * 63 + ny), 1, 1);
        count++;
    }

    ctx.strokeStyle = '#111';
    ctx.lineWidth = 1.5;
    ctx.beginPath();
    ctx.arc(142, 135, 10, 0, Math.PI * 2);
    ctx.stroke();
}
drawSpots();

// 15 parallel rays, bent by the lens to the focus
const rays = document.getElementById('rays');
for (let i = 0; i < 15; i++) {
    const y = 171.5 + i * 5.14;
    const line = document.createElementNS('http://www.w3.org/2000/svg', 'path');
    line.setAttribute('d', `M30 ${y}H129L551 ${204 + (i - 7) * 0.2}`);
    rays.appendChild(line);
}
```
